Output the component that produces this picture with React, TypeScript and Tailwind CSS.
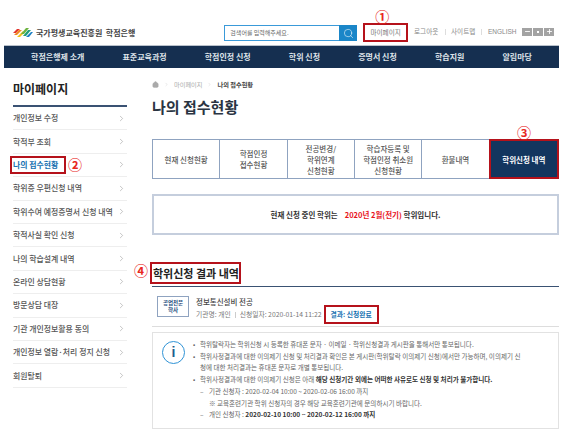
import React from 'react';
import { ChevronRight, Search, Home, Minus, Plus } from 'lucide-react';

const navItems = ['학점은행제 소개', '표준교육과정', '학점인정 신청', '학위 신청', '증명서 신청', '학습지원', '알림마당'];

const sideItems = [
  '개인정보 수정',
  '학적부 조회',
  '나의 접수현황',
  '학위증 우편신청 내역',
  '학위수여 예정증명서 신청 내역',
  '학적사실 확인 신청',
  '나의 학습설계 내역',
  '온라인 상담현황',
  '방문상담 대장',
  '기관 개인정보활용 동의',
  '개인정보 열람·처리 정지 신청',
  '회원탈퇴',
];

const tabs = [
  ['현재 신청현황'],
  ['학점인정', '접수현황'],
  ['전공변경/', '학위연계', '신청현황'],
  ['학습자등록 및', '학점인정 취소원', '신청현황'],
  ['환불내역'],
  ['학위신청 내역'],
];

const Logo = () => (
  <svg width="21" height="11" viewBox="0 0 21 11" className="shrink-0">
    <path d="M0 6 L4 2 L7 2 L3 6 Z" fill="#e2342d" />
    <path d="M1 8 L6 3 L9 3 L4 8 Z" fill="#ef8a24" />
    <path d="M4 10 L10 4 L11 6 L7 10 Z" fill="#f2c21e" />
    <path d="M8 7 L13 1 L16 1 L11 7 Z" fill="#6cb33f" />
    <path d="M10 9 L15 3 L18 3 L13 9 Z" fill="#1f9e7a" />
    <path d="M13 10 L18 5 L20 5 L16 10 Z" fill="#1c7fc4" />
  </svg>
);

export default function App() {
  return (
    <div className="w-[567px] h-[441px] overflow-hidden bg-white text-[#444] font-['Noto_Sans_CJK_KR','Noto_Sans',sans-serif]">
      {/* top bar */}
      <div className="h-[45px] flex items-start pl-[13px] pr-[13px]">
        <div className="flex items-center gap-[2px] mt-[27px] w-[213px]">
          <Logo />
          <span className="text-[8px] font-bold leading-[10px] text-[#444] whitespace-nowrap">국가평생교육진흥원 &nbsp;학점은행</span>
        </div>
        <div className="flex mt-[25px] w-[134px] h-[16px] border border-[#3a9ad9]">
          <span className="flex-1 pl-[5px] text-[6px] leading-[14px] text-[#666] whitespace-nowrap">검색어를 입력해주세요.</span>
          <span className="w-[18px] bg-[#1a86c8] flex items-center justify-center -my-px -mr-px">
            <Search size={11} color="#fff" strokeWidth={1.2} />
          </span>
        </div>
        <div className="relative mt-[23px] ml-[6px] w-[45px] h-[19px] border-2 border-[#b5121b] flex items-center justify-center text-[6.6px] text-[#777] whitespace-nowrap">
          마이페이지
          <span className="absolute -top-[16px] left-[10px] text-[14px] leading-[14px] font-bold text-[#e8281e]">①</span>
        </div>
        <div className="flex items-center mt-[27px] h-[9px] text-[6.6px] text-[#888] whitespace-nowrap">
          <span className="ml-[6px] w-[26px]">로그아웃</span>
          <span className="w-px h-[6px] bg-[#ddd] ml-[5px] mr-[5px]" />
          <span className="w-[25px]">사이트맵</span>
          <span className="w-px h-[6px] bg-[#ddd] ml-[5px] mr-[6px]" />
          <span className="w-[29px] font-['Liberation_Sans'] text-[6.5px]">ENGLISH</span>
          <span className="flex gap-px ml-[5px]">
            <span className="w-[10px] h-[8px] bg-[#a3a3a3] flex items-center justify-center"><Minus size={7} color="#fff" strokeWidth={3} /></span>
            <span className="w-[10px] h-[8px] bg-[#a3a3a3] flex items-center justify-center"><span className="w-[2px] h-[2px] bg-white" /></span>
            <span className="w-[10px] h-[8px] bg-[#a3a3a3] flex items-center justify-center"><Plus size={7} color="#fff" strokeWidth={3} /></span>
          </span>
        </div>
      </div>

      {/* main nav */}
      <div className="ml-[4px] w-[555px] h-[23px] bg-[#152f50] flex items-center justify-around px-2 text-[8px] font-bold text-[#dfe4ea] whitespace-nowrap border-t border-[#b9c1cb]">
        {navItems.map((item) => (
          <span key={item}>{item}</span>
        ))}
      </div>

      <div className="flex pl-[13px]">
        {/* sidebar */}
        <aside className="w-[114px] shrink-0">
          <h2 className="mt-[12px] h-[25px] text-[12px] leading-[18px] font-bold text-[#222]">마이페이지</h2>
          <div className="h-[2px] bg-[#3a5273]" />
          {sideItems.map((item, i) => (
            <div key={item} className="relative h-[23.4px] flex items-center justify-between border-b border-[#eee] pr-[3px] text-[7.9px] font-medium text-[#555] whitespace-nowrap">
              {i === 2 ? (
                <span className="-ml-[3px] h-[18px] w-[56px] border-2 border-[#b5121b] flex items-center pl-px font-bold text-[#146fb0]">{item}</span>
              ) : (
                <span>{item}</span>
              )}
              {i === 2 && (
                <span className="absolute left-[55px] top-[2px] text-[14px] leading-[16px] font-bold text-[#e8281e]">②</span>
              )}
              <ChevronRight size={9} color="#999" strokeWidth={1.5} className="shrink-0 -mr-[2px]" />
            </div>
          ))}
        </aside>

        {/* content */}
        <main className="ml-[25px] w-[407px] shrink-0">
          <div className="mt-[12px] flex items-center gap-[5px] text-[6.2px] leading-[9px] text-[#aaa] whitespace-nowrap">
            <Home size={7} color="#aaa" fill="#aaa" />
            <ChevronRight size={5} color="#ccc" />
            <span>마이페이지</span>
            <ChevronRight size={5} color="#ccc" />
            <span className="font-bold text-[#444]">나의 접수현황</span>
          </div>
          <h1 className="mt-[7px] text-[15px] leading-[22px] font-bold text-[#2a3442]">나의 접수현황</h1>

          <div className="relative mt-[21px] h-[40px] flex border border-[#8fa3c0]">
            {tabs.map((lines, i) => (
              <div
                key={lines[0]}
                className={
                  i === 5
                    ? 'flex-1 flex flex-col items-center justify-center bg-[#13365f] border-2 border-[#b5121b] -m-px text-[7.5px] leading-[11px] font-bold text-white whitespace-nowrap'
                    : 'flex-1 flex flex-col items-center justify-center border-r border-[#8fa3c0] text-[7.5px] leading-[11px] font-medium text-[#555] whitespace-nowrap'
                }
              >
                {lines.map((l) => (
                  <span key={l}>{l}</span>
                ))}
              </div>
            ))}
            <span className="absolute -top-[15px] right-[27px] text-[14px] leading-[14px] font-bold text-[#e8281e]">③</span>
          </div>

          <div className="mt-[15px] h-[41px] border-2 border-[#c5cedd] flex items-center justify-center text-[7.5px] font-bold text-[#333] whitespace-nowrap">
            현재 신청 중인 학위는<span className="ml-[7px] text-[#e8141c]">2020년 2월(전기)</span>&nbsp;학위입니다.
          </div>

          <div className="relative mt-[27px] -ml-[2px] w-[91px] h-[22px] border-2 border-[#b5121b] flex items-center pl-px text-[11px] font-bold text-[#222] whitespace-nowrap">
            학위신청 결과 내역
            <span className="absolute -left-[18px] -top-[2px] text-[14px] leading-[16px] font-bold text-[#e8281e]">④</span>
          </div>
          <div className="mt-[2px] h-px bg-[#3a5273]" />

          <div className="h-[40px] pt-[9px] pl-[5px] flex items-start border-b border-[#ddd]">
            <div className="w-[32px] h-[21px] border border-[#8fa3c0] flex flex-col items-center justify-center text-[5.5px] leading-[7px] font-bold text-[#1f4f80]">
              <span>공업전문</span>
              <span>학사</span>
            </div>
            <div className="ml-[7px] text-[6.8px] text-[#777] whitespace-nowrap">
              <div className="text-[7.5px] leading-[11px] font-medium text-[#444]">정보통신설비 전공</div>
              <div className="flex items-center h-[19px] -mt-[2px]">
                <span>기관명: 개인</span>
                <span className="w-px h-[6px] bg-[#ccc] mx-[4px]" />
                <span>신청일자: 2020-01-14 11:22</span>
                <span className="ml-[2px] w-[55px] h-[19px] border-2 border-[#b5121b] flex items-center justify-center font-bold text-[#146fb0]">결과: 신청완료</span>
              </div>
            </div>
          </div>

          <div className="mt-[5px] h-[97px] border border-[#e2e2e2] flex text-[6.55px] leading-[11.7px] text-[#666] whitespace-nowrap">
            <div className="w-[47px] shrink-0 pt-[8px] pl-[9px]">
              <div className="w-[23px] h-[23px] rounded-full border-[1.5px] border-[#2f93d6] flex items-center justify-center font-['Liberation_Sans'] text-[14px] font-bold text-[#1f5f8f]">i</div>
            </div>
            <div className="pt-[6px] relative">
              <div className="-ml-[7px] flex"><span className="w-[7px]">•</span><span>학위탈락자는 학위신청 시 등록한 휴대폰 문자 · 이메일 · 학위신청결과 게시판을 통해서만 통보됩니다.</span></div>
              <div className="-ml-[7px] flex"><span className="w-[7px]">•</span><span>학위사정결과에 대한 이의제기 신청 및 처리결과 확인은 본 게시판(학위탈락 이의제기 신청)에서만 가능하며, 이의제기 신</span></div>
              <div>청에 대한 처리결과는 휴대폰 문자로 개별 통보됩니다.</div>
              <div className="-ml-[7px] flex"><span className="w-[7px]">•</span><span>학위사정결과에 대한 이의제기 신청은 아래 <b className="text-[#333]">해당 신청기간 외에는 어떠한 사유로도 신청 및 처리가 불가합니다.</b></span></div>
              <div className="flex"><span className="w-[9px]">–</span><span>기관 신청자 : 2020-02-04 10:00 ~ 2020-02-06 16:00 까지</span></div>
              <div className="pl-[9px]">※ 교육훈련기관 학위 신청자의 경우 해당 교육훈련기관에 문의하시기 바랍니다.</div>
              <div className="flex"><span className="w-[9px]">–</span><span>개인 신청자 : <b className="text-[#333]">2020-02-10 10:00 ~ 2020-02-12 16:00 까지</b></span></div>
            </div>
          </div>
        </main>
      </div>
    </div>
  );
}
